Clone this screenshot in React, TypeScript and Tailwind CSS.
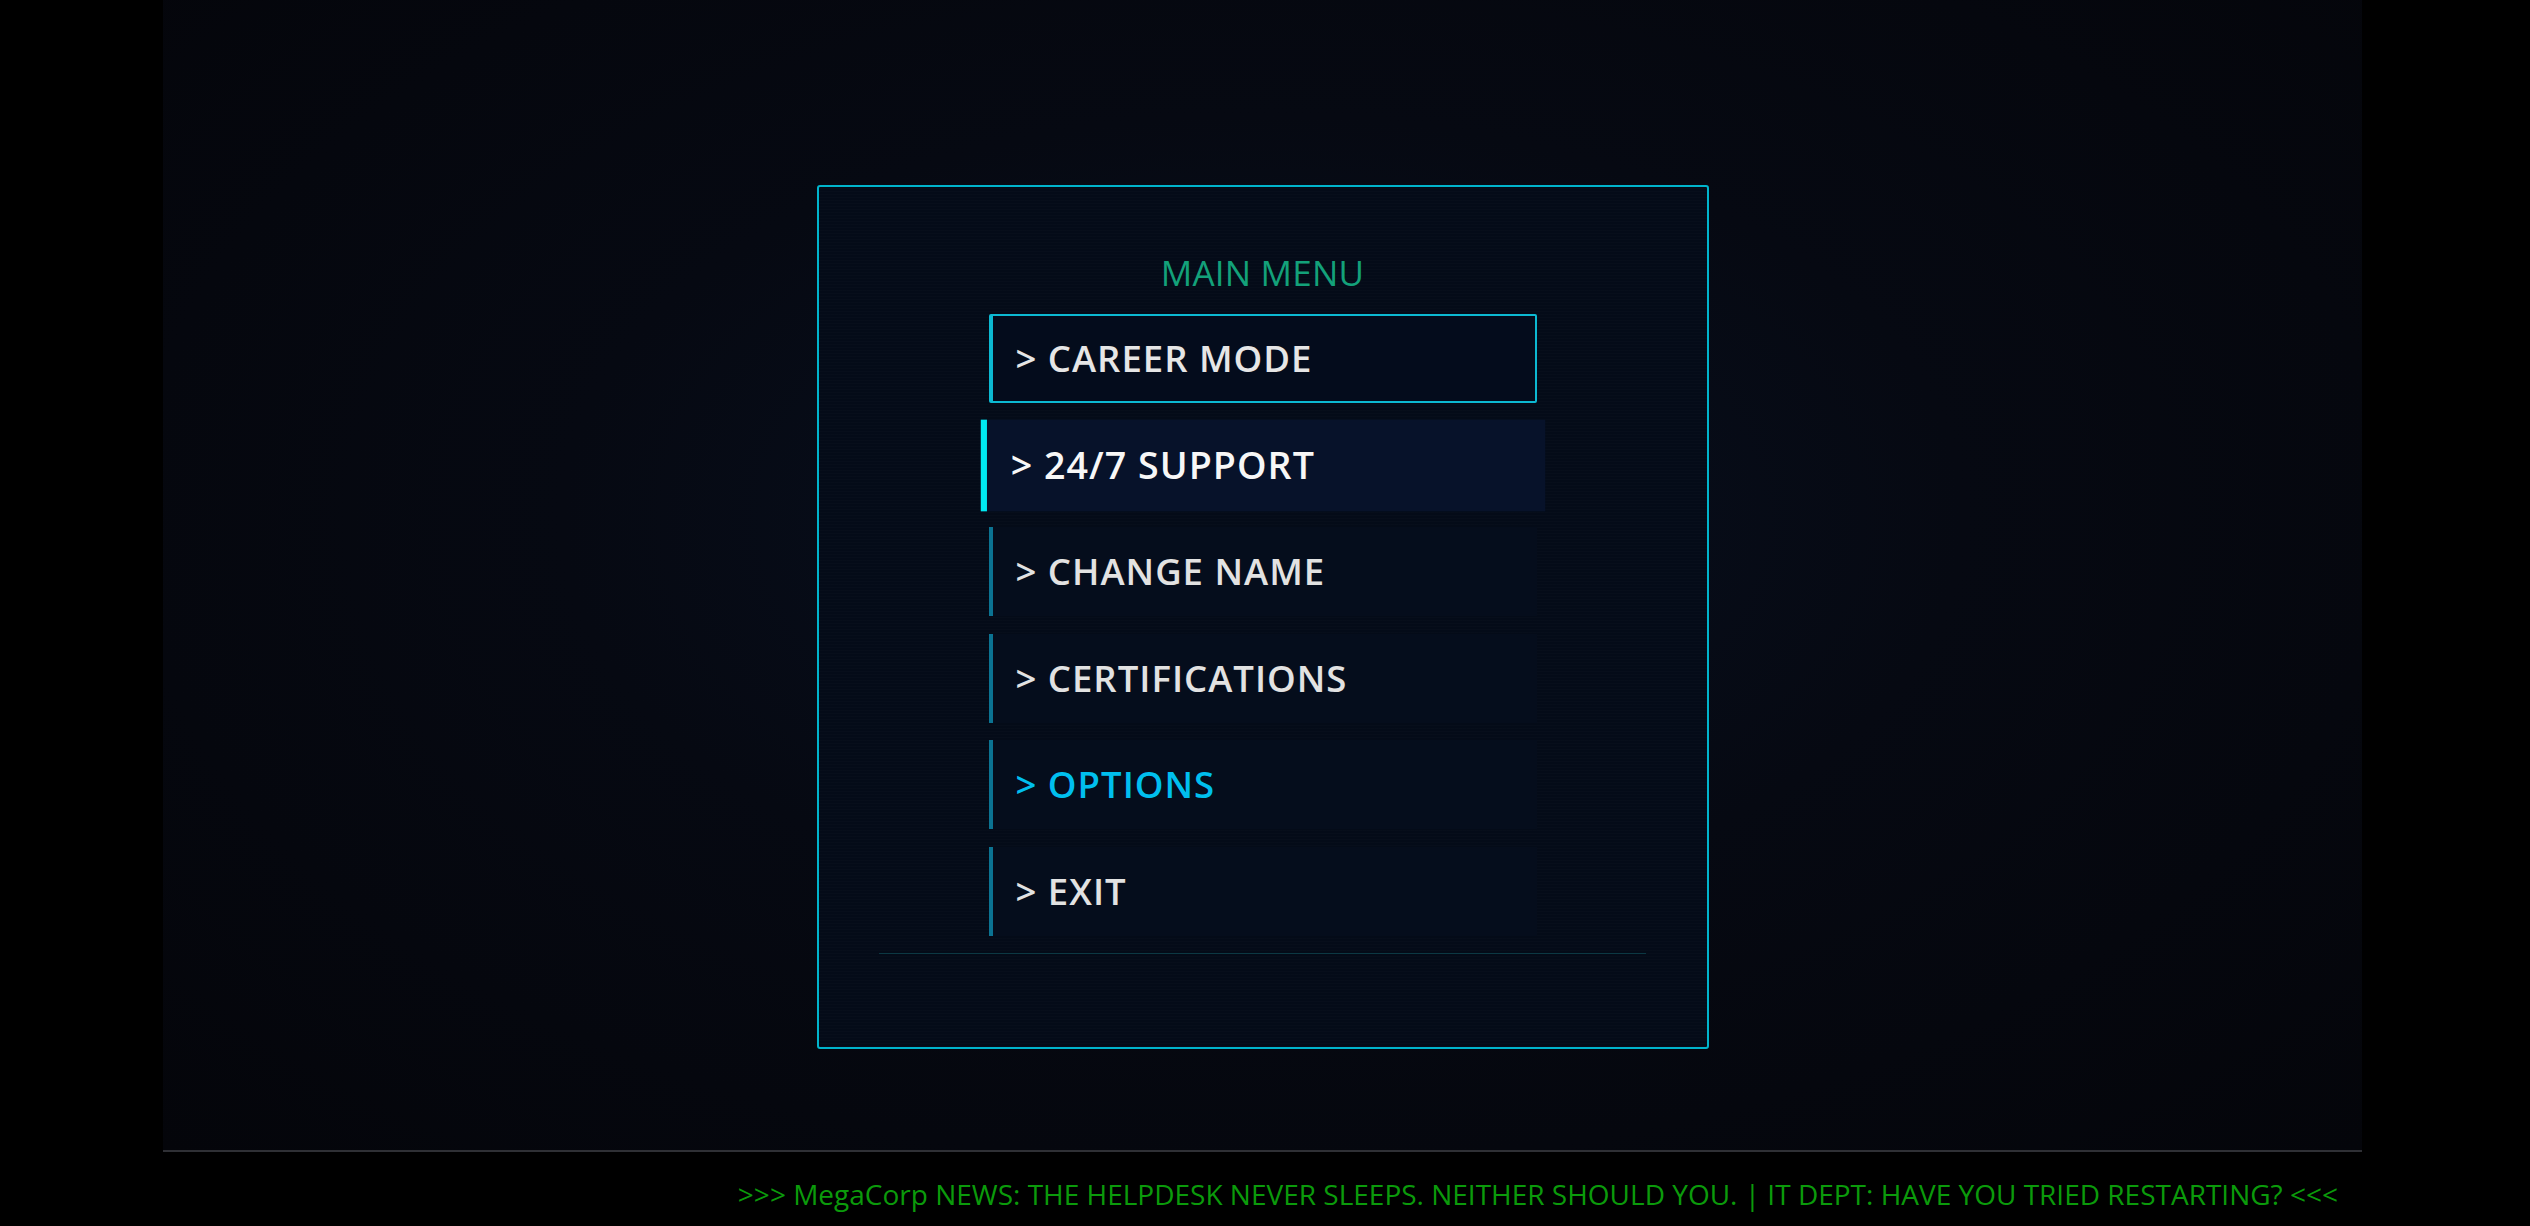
import React from "react";

type Item = { label: string; state: "selected" | "hover" | "idle" | "accent" };

const items: Item[] = [
  { label: "CAREER MODE", state: "selected" },
  { label: "24/7 SUPPORT", state: "hover" },
  { label: "CHANGE NAME", state: "idle" },
  { label: "CERTIFICATIONS", state: "idle" },
  { label: "OPTIONS", state: "accent" },
  { label: "EXIT", state: "idle" },
];

function MenuRow({ item }: { item: Item }) {
  const base =
    "flex h-[89px] w-[548px] items-center pl-[23px] text-[36.5px] font-semibold leading-none tracking-[1px]";
  if (item.state === "selected") {
    return (
      <div
        className={`${base} rounded-[2px] border-2 border-l-4 border-[#0cb9d2] bg-[#040c1c] text-[#e6e6e6]`}
      >
        &gt; {item.label}
      </div>
    );
  }
  if (item.state === "hover") {
    return (
      <div
        className={`${base} scale-[1.03] border-l-[6px] border-[#00eaf2] bg-[#07122a] text-[#f7f7f7]`}
      >
        &gt; {item.label}
      </div>
    );
  }
  return (
    <div
      className={`${base} border-l-4 border-[#0b7392] bg-[#050d1c] ${
        item.state === "accent" ? "text-[#00bfee]" : "text-[#e2e2e2]"
      }`}
    >
      &gt; {item.label}
    </div>
  );
}

export default function App() {
  return (
    <div
      className="flex h-[1226px] w-[2530px] bg-black pl-[163px]"
      style={{ fontFamily: '"Open Sans", "Noto Sans", sans-serif' }}
    >
      <div className="flex w-[2199px] flex-col">
        {/* playfield */}
        <div className="flex h-[1150px] flex-col items-center bg-[#05070d] bg-[image:radial-gradient(ellipse_at_50%_45%,#081020_0%,#060912_45%,#04050a_100%)] pt-[185px]">
          <div className="flex h-[864px] w-[892px] flex-col items-center rounded-[3px] border-2 border-[#00b4cc] bg-[#040b18] bg-[image:repeating-linear-gradient(0deg,rgba(255,255,255,0.012)_0px,rgba(255,255,255,0.012)_1px,transparent_1px,transparent_3px)] pt-[68px]">
            <div className="mb-[24px] text-[35px] leading-none tracking-[0.2px] text-[#13a17a]">
              MAIN MENU
            </div>
            <div className="flex flex-col gap-[17.5px]">
              {items.map((it) => (
                <MenuRow key={it.label} item={it} />
              ))}
            </div>
            <div className="mt-[17.5px] h-px w-[767px] bg-[#0c3843]" />
          </div>
        </div>
        <div className="h-[2px] bg-[#2f3035]" />
        {/* news ticker */}
        <div className="flex h-[74px] items-center justify-end bg-black pr-[24px] pt-[10px]">
          <span className="whitespace-nowrap text-[28px] leading-none text-[#0b9a0b]">
            &gt;&gt;&gt; MegaCorp NEWS: THE HELPDESK NEVER SLEEPS. NEITHER SHOULD
            YOU. | IT DEPT: HAVE YOU TRIED RESTARTING? &lt;&lt;&lt;
          </span>
        </div>
      </div>
    </div>
  );
}
